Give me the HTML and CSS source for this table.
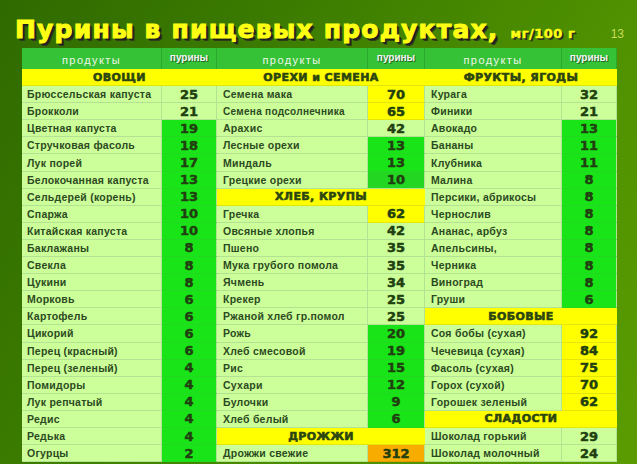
FILE: index.html
```html
<!DOCTYPE html>
<html lang="ru">
<head>
<meta charset="utf-8">
<title>Пурины в пищевых продуктах</title>
<link rel="stylesheet" href="styles.css">
</head>
<body>
<div class="slide">
  <header class="title-bar">
    <h1 class="title">Пурины в пищевых продуктах,</h1>
    <span class="unit">мг/100 г</span>
    <span class="page-num">13</span>
  </header>
  <div class="sheet">
    <div class="group g1">
      <div class="hd">продукты</div><div class="hd hv">пурины</div>
      <div class="cat">ОВОЩИ</div>
      <div class="nm">Брюссельская капуста</div><div class="v">25</div>
      <div class="nm">Брокколи</div><div class="v">21</div>
      <div class="nm">Цветная капуста</div><div class="v g">19</div>
      <div class="nm">Стручковая фасоль</div><div class="v g">18</div>
      <div class="nm">Лук порей</div><div class="v g">17</div>
      <div class="nm">Белокочанная капуста</div><div class="v g">13</div>
      <div class="nm">Сельдерей (корень)</div><div class="v g">13</div>
      <div class="nm">Спаржа</div><div class="v g">10</div>
      <div class="nm">Китайская капуста</div><div class="v g">10</div>
      <div class="nm">Баклажаны</div><div class="v g">8</div>
      <div class="nm">Свекла</div><div class="v g">8</div>
      <div class="nm">Цукини</div><div class="v g">8</div>
      <div class="nm">Морковь</div><div class="v g">6</div>
      <div class="nm">Картофель</div><div class="v g">6</div>
      <div class="nm">Цикорий</div><div class="v g">6</div>
      <div class="nm">Перец (красный)</div><div class="v g">6</div>
      <div class="nm">Перец (зеленый)</div><div class="v g">4</div>
      <div class="nm">Помидоры</div><div class="v g">4</div>
      <div class="nm">Лук репчатый</div><div class="v g">4</div>
      <div class="nm">Редис</div><div class="v g">4</div>
      <div class="nm">Редька</div><div class="v g">4</div>
      <div class="nm">Огурцы</div><div class="v g">2</div>
    </div>
    <div class="group g2">
      <div class="hd">продукты</div><div class="hd hv">пурины</div>
      <div class="cat">ОРЕХИ и СЕМЕНА</div>
      <div class="nm">Семена мака</div><div class="v y">70</div>
      <div class="nm small">Семена подсолнечника</div><div class="v y">65</div>
      <div class="nm">Арахис</div><div class="v">42</div>
      <div class="nm">Лесные орехи</div><div class="v g">13</div>
      <div class="nm">Миндаль</div><div class="v g">13</div>
      <div class="nm">Грецкие орехи</div><div class="v dg">10</div>
      <div class="cat">ХЛЕБ, КРУПЫ</div>
      <div class="nm">Гречка</div><div class="v y">62</div>
      <div class="nm">Овсяные хлопья</div><div class="v">42</div>
      <div class="nm">Пшено</div><div class="v">35</div>
      <div class="nm">Мука грубого помола</div><div class="v">35</div>
      <div class="nm">Ячмень</div><div class="v">34</div>
      <div class="nm">Крекер</div><div class="v">25</div>
      <div class="nm">Ржаной хлеб гр.помол</div><div class="v">25</div>
      <div class="nm">Рожь</div><div class="v g">20</div>
      <div class="nm">Хлеб смесовой</div><div class="v g">19</div>
      <div class="nm">Рис</div><div class="v g">15</div>
      <div class="nm">Сухари</div><div class="v g">12</div>
      <div class="nm">Булочки</div><div class="v g">9</div>
      <div class="nm">Хлеб белый</div><div class="v g">6</div>
      <div class="cat">ДРОЖЖИ</div>
      <div class="nm">Дрожжи свежие</div><div class="v o">312</div>
    </div>
    <div class="group g3">
      <div class="hd">продукты</div><div class="hd hv">пурины</div>
      <div class="cat">ФРУКТЫ, ЯГОДЫ</div>
      <div class="nm">Курага</div><div class="v">32</div>
      <div class="nm">Финики</div><div class="v">21</div>
      <div class="nm">Авокадо</div><div class="v g">13</div>
      <div class="nm">Бананы</div><div class="v g">11</div>
      <div class="nm">Клубника</div><div class="v g">11</div>
      <div class="nm">Малина</div><div class="v g">8</div>
      <div class="nm">Персики, абрикосы</div><div class="v g">8</div>
      <div class="nm">Чернослив</div><div class="v g">8</div>
      <div class="nm">Ананас, арбуз</div><div class="v g">8</div>
      <div class="nm">Апельсины,</div><div class="v g">8</div>
      <div class="nm">Черника</div><div class="v g">8</div>
      <div class="nm">Виноград</div><div class="v g">8</div>
      <div class="nm">Груши</div><div class="v g">6</div>
      <div class="cat">БОБОВЫЕ</div>
      <div class="nm">Соя бобы (сухая)</div><div class="v y">92</div>
      <div class="nm">Чечевица (сухая)</div><div class="v y">84</div>
      <div class="nm">Фасоль (сухая)</div><div class="v y">75</div>
      <div class="nm">Горох (сухой)</div><div class="v y">70</div>
      <div class="nm">Горошек зеленый</div><div class="v y">62</div>
      <div class="cat">СЛАДОСТИ</div>
      <div class="nm">Шоколад горький</div><div class="v">29</div>
      <div class="nm">Шоколад молочный</div><div class="v">24</div>
    </div>
  </div>
</div>
</body>
</html>
```

FILE: styles.css
```css
* { box-sizing: border-box; }
html, body { margin: 0; padding: 0; }
body {
  width: 637px;
  height: 464px;
  overflow: hidden;
  background: linear-gradient(120deg, #2f6a00 0%, #3d7d00 35%, #4f9100 70%, #5a9c00 100%);
  font-family: "Liberation Sans", Arial, sans-serif;
}
.slide {
  width: 637px;
  height: 464px;
  display: flex;
  flex-direction: column;
}
.title-bar {
  height: 48px;
  display: flex;
  align-items: baseline;
  padding: 11px 13px 0 15px;
}
.title {
  margin: 0;
  font-family: "DejaVu Sans", sans-serif;
  font-weight: bold;
  font-size: 25px;
  line-height: 37px;
  letter-spacing: 1.2px;
  color: #ffff14;
  text-shadow: 2px 2px 0 #1e1e1e, 3px 3px 0 #2e3a1e;
  -webkit-text-stroke: 1px #ffff14;
}
.unit {
  margin-left: 12px;
  font-family: "DejaVu Sans", sans-serif;
  font-weight: bold;
  font-size: 13px;
  letter-spacing: 0.5px;
  color: #ffff14;
  text-shadow: 1px 1px 0 #1e1e1e, 2px 2px 0 #2e3a1e;
  -webkit-text-stroke: 0.5px #ffff14;
}
.page-num {
  margin-left: auto;
  font-size: 12px;
  color: #c8dc5a;
}
.sheet {
  display: flex;
  margin-left: 22px;
}
.group {
  display: grid;
  grid-template-rows: 21px;
  grid-auto-rows: 17.1px;
}
.g1 { grid-template-columns: 140px 55px; }
.g2 { grid-template-columns: 151px 57px; }
.g3 { grid-template-columns: 137px 55px; }
.hd {
  background: #36c236;
  border-right: 1px solid #2ca82c;
  display: flex;
  align-items: center;
  justify-content: center;
  color: #eef6e6;
  font-size: 11px;
  letter-spacing: 1.4px;
  padding-top: 2px;
}
.hd.hv {
  font-size: 10px;
  font-weight: bold;
  letter-spacing: 0;
  align-items: flex-start;
  padding-top: 4px;
  color: #f4f4f4;
  text-shadow: 1px 1px 0 #1e6a1e;
}
.cat {
  grid-column: 1 / span 2;
  background: #ffff00;
  border-bottom: 1px solid #e2e60a;
  display: flex;
  align-items: center;
  justify-content: center;
  font-family: "DejaVu Sans", sans-serif;
  font-weight: bold;
  font-size: 11px;
  letter-spacing: 0.4px;
  color: #2c4610;
  -webkit-text-stroke: 0.6px #2c4610;
}
.nm {
  background: #ccff99;
  border-bottom: 1px solid #b2e292;
  border-right: 1px solid #b2e292;
  display: flex;
  align-items: center;
  padding-left: 6px;
  font-size: 10.5px;
  font-weight: bold;
  letter-spacing: 0.25px;
  color: #2c4a22;
  white-space: nowrap;
}
.g1 .nm { padding-left: 5px; }
.nm.small { font-size: 10px; letter-spacing: 0.3px; }
.v {
  background: #ccff99;
  border-bottom: 1px solid #b2e292;
  border-right: 1px solid #b2e292;
  display: flex;
  align-items: center;
  justify-content: center;
  font-family: "DejaVu Sans", sans-serif;
  font-weight: bold;
  font-size: 13px;
  color: #213f10;
  -webkit-text-stroke: 0.5px #213f10;
}
.v.g { background: #18e418; border-bottom-color: #22d822; border-right-color: #b2e292; }
.v.dg { background: #22d622; border-bottom-color: #b2e292; }
.v.y { background: #ffff00; border-bottom-color: #e6e60a; }
.v.o { background: #f8ac00; border-bottom-color: #e09a00; }
```
